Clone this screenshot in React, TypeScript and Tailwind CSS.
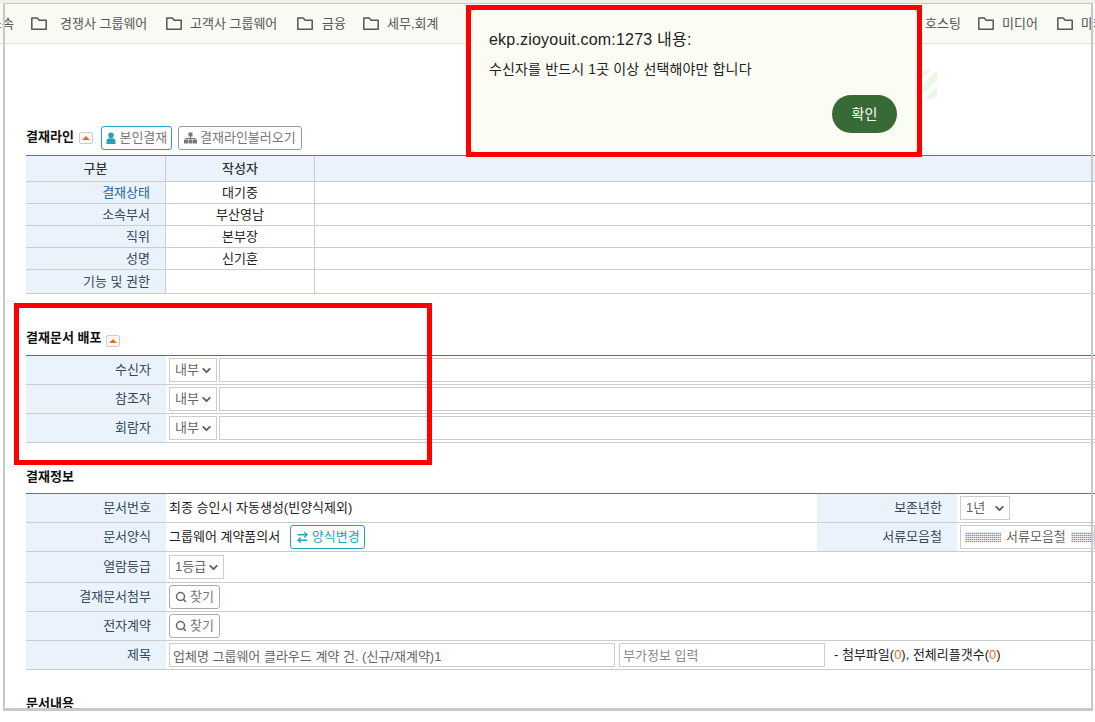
import { ChevronDown, Search, ArrowRightLeft } from "lucide-react";

const navItems = [
  { label: "경쟁사 그룹웨어", className: "w-[135px] gap-[13px]" },
  { label: "고객사 그룹웨어", className: "w-[131px] gap-[8px]" },
  { label: "금융", className: "w-[66px] gap-[9px]" },
  { label: "세무,회계", className: "w-[93px] gap-[8px]" },
];

const FolderIcon = () => (
  <svg width="16" height="13" viewBox="0 0 16 13" fill="none" stroke="#555" strokeWidth="1.5" className="shrink-0">
    <path d="M0.8 12.2V1H6.2L8.2 3.2H15.2V12.2Z" strokeLinejoin="round" />
  </svg>
);

const NavItem = ({ label, className = "" }: { label: string; className?: string }) => (
  <div className={`flex items-center shrink-0 ${className}`}>
    <FolderIcon />
    <span className="text-[13px] text-[#555] whitespace-nowrap pt-[1px]">{label}</span>
  </div>
);

const FoldButton = () => (
  <span className="inline-flex items-center justify-center w-[14px] h-[12px] border border-[#ccc] rounded-[2px] bg-[#f8f8f8] ml-[5px]">
    <span className="w-0 h-0 border-x-[4px] border-x-transparent border-b-[4px] border-b-[#f26b1d]" />
  </span>
);

const Select = ({ value, className = "" }: { value: string; className?: string }) => (
  <div className={`h-[24px] border border-[#ccc] flex items-center justify-between pl-[5px] pr-[3px] text-[13px] text-[#666] bg-white shrink-0 ${className}`}>
    <span>{value}</span>
    <ChevronDown size={13} strokeWidth={3.5} className="text-[#6b5f55]" />
  </div>
);

const FindButton = () => (
  <button className="h-[24px] w-[51px] border border-[#aaa] rounded-[3px] flex items-center justify-center gap-[3px] text-[13px] text-[#777] bg-white">
    <Search size={12} strokeWidth={3} className="text-[#666]" />
    찾기
  </button>
);

const Row = ({ label, height, children }: { label: string; height: string; children?: React.ReactNode }) => (
  <div className={`flex border-b border-[#ccc] ${height}`}>
    <div className="w-[140px] shrink-0 bg-[#eaf3fb] flex items-center justify-end pr-[15px] text-[13px] text-[#34495e]">{label}</div>
    <div className="flex-1 flex items-center pl-[3px] gap-[2px] min-w-0 text-[13px] text-[#222]">{children}</div>
  </div>
);

const LineRow = ({ label, value, height = "h-[22px]", blue = false }: { label: string; value: string; height?: string; blue?: boolean }) => (
  <div className={`flex border-b border-[#ccc] text-[13px] ${height}`}>
    <div className={`w-[140px] bg-[#eaf3fb] border-r border-[#ccc] flex items-center justify-end pr-[15px] ${blue ? "text-[#2a6496]" : "text-[#34495e]"}`}>{label}</div>
    <div className="w-[149px] border-r border-[#ccc] flex items-center justify-center text-[#222]">{value}</div>
    <div className="flex-1" />
  </div>
);

const FillerBlock = () => (
  <span className="w-[36px] h-[10px] shrink-0 bg-[repeating-linear-gradient(90deg,#ffffff80_0,#ffffff80_1px,transparent_1px,transparent_2px),repeating-linear-gradient(0deg,#7f93a8_0,#7f93a8_1px,#e4e4e4_1px,#e4e4e4_2px)]" />
);

export default function App() {
  return (
    <div className="relative w-[1095px] h-[722px] overflow-hidden bg-white font-['Liberation_Sans','Noto_Sans_CJK_KR',sans-serif]">
      <div className="h-[708px] overflow-hidden pt-[3px] bg-[#eef1e6]">
        {/* 즐겨찾기 바 */}
        <div className="h-[41px] bg-[#f8faf3] border-b border-[#dfe5da] flex items-center overflow-hidden">
          <span className="text-[13px] text-[#555] -ml-[10px] w-[41px] shrink-0 pt-[1px]">소속</span>
          {navItems.map((item) => (
            <NavItem key={item.label} label={item.label} className={item.className} />
          ))}
          <div className="w-[445px] shrink-0" />
          <NavItem label="호스팅" className="w-[77px] gap-[8px]" />
          <NavItem label="미디어" className="w-[79px] gap-[8px]" />
          <NavItem label="마케팅" className="gap-[8px]" />
        </div>

        <div className="pl-[26px] bg-white h-full">
          {/* 결재라인 */}
          <div className="h-[111px] flex items-end pb-[5px]">
            <div className="flex items-center">
              <span className="text-[13px] font-bold text-[#111] mb-[3px]">결재라인</span>
              <FoldButton />
              <button className="ml-[8px] h-[24px] w-[71px] border border-[#2aa0b8] rounded-[3px] flex items-center justify-center gap-[2px] text-[13px] text-[#777] bg-white">
                <svg width="12" height="12" viewBox="0 0 12 12" fill="#2aa0b8">
                  <circle cx="6" cy="3.2" r="2.8" />
                  <path d="M1.5 12V8.8C1.5 7 3 6.2 4.5 6.2H7.5C9 6.2 10.5 7 10.5 8.8V12Z" />
                </svg>
                본인결재
              </button>
              <button className="ml-[6px] h-[24px] w-[124px] border border-[#999] rounded-[3px] flex items-center justify-center gap-[3px] text-[13px] text-[#777] bg-white">
                <svg width="13" height="12" viewBox="0 0 13 12" fill="#777">
                  <rect x="4.5" y="0.5" width="4" height="4" />
                  <rect x="6" y="4" width="1" height="3" />
                  <rect x="1.5" y="6" width="10" height="1" />
                  <rect x="0" y="7.5" width="4" height="4" />
                  <rect x="4.5" y="7.5" width="4" height="4" />
                  <rect x="9" y="7.5" width="4" height="4" />
                </svg>
                결재라인불러오기
              </button>
            </div>
          </div>

          <div className="border-t border-[#4a7ba8]">
            <div className="flex border-b border-[#ccc] h-[26px] text-[13px] font-medium bg-[#eaf3fb] text-[#333]">
              <div className="w-[140px] border-r border-[#ccc] flex items-center justify-center">구분</div>
              <div className="w-[149px] border-r border-[#ccc] flex items-center justify-center">작성자</div>
            </div>
            <LineRow label="결재상태" value="대기중" blue />
            <LineRow label="소속부서" value="부산영남" />
            <LineRow label="직위" value="본부장" />
            <LineRow label="성명" value="신기훈" />
            <LineRow label="기능 및 권한" value="" height="h-[24px]" />
          </div>

          {/* 결재문서 배포 */}
          <div className="h-[61px] flex items-end pb-[8px]">
            <span className="text-[13px] font-bold text-[#111]">결재문서 배포</span>
            <FoldButton />
          </div>
          <div className="border-t border-[#4a6f8f]">
            {["수신자", "참조자", "회람자"].map((label) => (
              <Row key={label} label={label} height="h-[29px]">
                <Select value="내부" className="w-[48px]" />
                <div className="h-[24px] flex-1 border border-[#ccc] bg-white -mr-[4px]" />
              </Row>
            ))}
          </div>

          {/* 결재정보 */}
          <div className="h-[50px] flex items-end pb-[7px]">
            <span className="text-[13px] font-bold text-[#111]">결재정보</span>
          </div>
          <div className="border-t border-[#4a7ba8]">
            <div className="flex border-b border-[#ccc] h-[29px]">
              <div className="w-[140px] shrink-0 bg-[#eaf3fb] flex items-center justify-end pr-[15px] text-[13px] text-[#34495e]">문서번호</div>
              <div className="w-[651px] shrink-0 flex items-center pl-[3px] text-[13px] text-[#222]">최종 승인시 자동생성(빈양식제외)</div>
              <div className="w-[140px] shrink-0 bg-[#eaf3fb] flex items-center justify-end pr-[15px] text-[13px] text-[#34495e]">보존년한</div>
              <div className="flex-1 flex items-center pl-[3px]">
                <Select value="1년" className="w-[50px]" />
              </div>
            </div>
            <div className="flex border-b border-[#ccc] h-[29px]">
              <div className="w-[140px] shrink-0 bg-[#eaf3fb] flex items-center justify-end pr-[15px] text-[13px] text-[#34495e]">문서양식</div>
              <div className="w-[651px] shrink-0 flex items-center pl-[3px] text-[13px] text-[#222]">
                그룹웨어 계약품의서
                <button className="ml-[10px] h-[24px] w-[75px] border border-[#2aa0b8] rounded-[3px] flex items-center justify-center gap-[3px] text-[13px] text-[#2aa0b8] bg-white">
                  <ArrowRightLeft size={13} strokeWidth={2.5} />
                  양식변경
                </button>
              </div>
              <div className="w-[140px] shrink-0 bg-[#eaf3fb] flex items-center justify-end pr-[15px] text-[13px] text-[#34495e]">서류모음철</div>
              <div className="flex-1 flex items-center pl-[3px] min-w-0">
                <div className="h-[24px] w-full border border-[#ccc] flex items-center pl-[4px] gap-[5px] text-[13px] text-[#666] overflow-hidden whitespace-nowrap">
                  <FillerBlock />
                  서류모음철
                  <FillerBlock />
                </div>
              </div>
            </div>
            <Row label="열람등급" height="h-[31px]">
              <Select value="1등급" className="w-[55px]" />
            </Row>
            <Row label="결재문서첨부" height="h-[29px]">
              <FindButton />
            </Row>
            <Row label="전자계약" height="h-[29px]">
              <FindButton />
            </Row>
            <Row label="제목" height="h-[29px]">
              <input
                readOnly
                value="업체명 그룹웨어 클라우드 계약 건. (신규/재계약)1"
                className="h-[24px] w-[446px] border border-[#ccc] px-[3px] text-[13px] text-[#666] outline-none"
              />
              <input
                readOnly
                placeholder="부가정보 입력"
                className="ml-[2px] h-[24px] w-[206px] border border-[#ccc] px-[3px] text-[13px] placeholder:text-[#888] outline-none"
              />
              <span className="ml-[7px] whitespace-nowrap">
                - 첨부파일(<span className="text-[#f26b1d]">0</span>), 전체리플갯수(<span className="text-[#f26b1d]">0</span>)
              </span>
            </Row>
          </div>

          <div className="mt-[24px] text-[13px] font-bold text-[#111]">문서내용</div>
        </div>
      </div>

      {/* 창 테두리 */}
      <div className="absolute left-[3px] top-[3px] w-[1090px] h-[708px] border-[#c8c8c8] border-t border-l-[2px] border-r-[2px] border-b-[3px] pointer-events-none" />

      {/* 빨간 표시 */}
      <div className="absolute left-[14px] top-[303px] w-[418px] h-[162px] border-[5px] border-[#ff0000] pointer-events-none" />

      {/* 뒤쪽 줄무늬 */}
      <div className="absolute left-[922px] top-[70px] w-[15px] h-[29px] bg-[repeating-linear-gradient(135deg,#eaf9e6_0,#eaf9e6_6px,#ffffff_6px,#ffffff_11px)]" />

      {/* 알림창 */}
      <div className="absolute left-[466px] top-[5px] w-[456px] h-[152px] border-[5px] border-[#ff0000] bg-[#d8d8d8]">
        <div className="relative h-full rounded-[5px] bg-[#fbfdf5]">
          <p className="absolute left-[18px] top-[18px] text-[16px] tracking-[0.2px] text-[#222]">ekp.zioyouit.com:1273 내용:</p>
          <p className="absolute left-[18px] top-[49px] text-[14px] tracking-[0.15px] text-[#222]">수신자를 반드시 1곳 이상 선택해야만 합니다</p>
          <button className="absolute right-[20px] bottom-[19px] w-[65px] h-[38px] rounded-full bg-[#376a35] text-[14px] text-white">확인</button>
        </div>
      </div>
    </div>
  );
}
